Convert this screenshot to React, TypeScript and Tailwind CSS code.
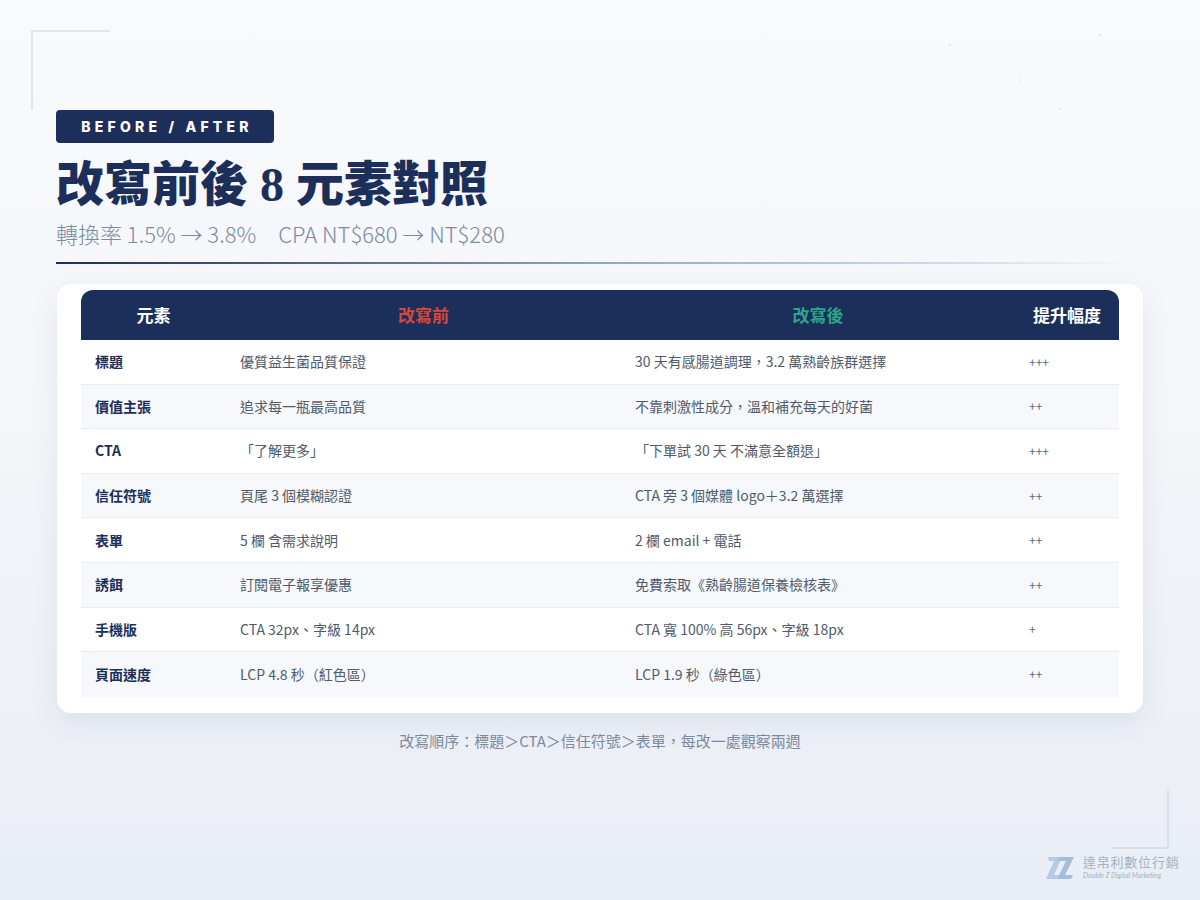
import React from 'react';

const rows = [
    { k: '標題', before: '優質益生菌品質保證', after: '30 天有感腸道調理，3.2 萬熟齡族群選擇', lift: '+++' },
    { k: '價值主張', before: '追求每一瓶最高品質', after: '不靠刺激性成分，溫和補充每天的好菌', lift: '++' },
    { k: 'CTA', before: '「了解更多」', after: '「下單試 30 天 不滿意全額退」', lift: '+++' },
    { k: '信任符號', before: '頁尾 3 個模糊認證', after: 'CTA 旁 3 個媒體 logo＋3.2 萬選擇', lift: '++' },
    { k: '表單', before: '5 欄 含需求說明', after: '2 欄 email + 電話', lift: '++' },
    { k: '誘餌', before: '訂閱電子報享優惠', after: '免費索取《熟齡腸道保養檢核表》', lift: '++' },
    { k: '手機版', before: 'CTA 32px、字級 14px', after: 'CTA 寬 100% 高 56px、字級 18px', lift: '+' },
    { k: '頁面速度', before: 'LCP 4.8 秒（紅色區）', after: 'LCP 1.9 秒（綠色區）', lift: '++' },
];

function Logo() {
    return (
        <div className="absolute left-[1046px] top-[853px] flex items-center gap-[9px]">
            <svg width="28" height="28" viewBox="0 0 28 28">
                {/* double Z mark */}
                <polygon points="2,4 16,4 8,22 15,22 13,26 0,26 8,8 3,8" fill="#b5cbe3" />
                <polygon points="13,4 28,4 19,22 27,22 25,26 11,26 20,8 12,8" fill="#a3bddb" />
            </svg>
            <div className="flex flex-col leading-none">
                <span className="text-[13px] tracking-[0.06em] text-[#a6b2c2]">達帛利數位行銷</span>
                <span className="mt-[4px] text-[7px] italic text-[#a6b2c2] font-['Lato',sans-serif]">Double Z Digital Marketing</span>
            </div>
        </div>
    );
}

export default function App() {
    return (
        <div className="relative w-[1200px] h-[900px] overflow-hidden bg-gradient-to-b from-[#f9fafc] via-[#f3f5f9] to-[#e9edf5] font-['Noto_Sans_CJK_TC','Noto_Sans',sans-serif]">
            {/* corner brackets */}
            <div className="absolute left-[31px] top-[30px] w-[79px] h-[80px] border-l-2 border-t-2 border-[#dfe6ef]"></div>
            <div className="absolute right-[31px] top-[790px] w-[58px] h-[59px] border-r-2 border-b-2 border-[#d8dfe9]"></div>

            {/* faint dots */}
            <div className="absolute left-[949px] top-[44px] w-[2px] h-[2px] rounded-full bg-[#d5dce6]"></div>
            <div className="absolute left-[1099px] top-[34px] w-[2px] h-[2px] rounded-full bg-[#d5dce6]"></div>
            <div className="absolute left-[1019px] top-[79px] w-[2px] h-[2px] rounded-full bg-[#dfe5ec]"></div>
            <div className="absolute left-[1059px] top-[108px] w-[2px] h-[2px] rounded-full bg-[#dfe5ec]"></div>

            <div className="flex flex-col px-[56px] pt-[110px]">
                {/* Badge */}
                <div className="flex h-[33px] w-[218px] items-center justify-center rounded-[4px] bg-[#1c2f5a] pl-[4px] text-[14px] font-extrabold tracking-[0.3em] text-white font-['Inter',sans-serif]">
                    BEFORE / AFTER
                </div>

                {/* Heading */}
                <h1 className="mt-[12px] h-[60px] text-[48px] leading-[60px] font-black text-[#1c2f5a] font-['Liberation_Serif','Noto_Sans_CJK_TC',serif]">
                    改寫前後 8 元素對照
                </h1>

                <p className="mt-[3px] h-[30px] text-[22px] leading-[30px] font-light text-[#7c8ba1]">
                    轉換率 1.5% → 3.8%<span className="ml-[22px]">CPA NT$680 → NT$280</span>
                </p>

                <div className="mt-[14px] h-[2px] w-[1080px] bg-gradient-to-r from-[#1c2f5a] via-[#8aa6c8] to-transparent"></div>

                {/* Table card */}
                <div className="mt-[20px] ml-px w-[1086px] rounded-[14px] bg-white px-[24px] pt-[6px] pb-[16px] shadow-[0_10px_30px_rgba(30,50,90,0.08)]">
                    <div className="grid grid-cols-[145px_395px_394px_104px] h-[50px] items-center rounded-t-[12px] bg-[#1c2f5a] text-[17px] font-bold">
                        <div className="text-center text-white">元素</div>
                        <div className="text-center text-[#d9473b]">改寫前</div>
                        <div className="text-center text-[#2ba58a]">改寫後</div>
                        <div className="text-center text-white">提升幅度</div>
                    </div>
                    {rows.map((r, i) => (
                        <div
                            key={r.k}
                            className={`grid grid-cols-[145px_395px_394px_104px] h-[44.6px] items-center text-[14px] ${i % 2 === 1 ? 'bg-[#f6f8fb]' : 'bg-white'} ${i < rows.length - 1 ? 'border-b border-[#e9edf3]' : ''}`}
                        >
                            <div className="pl-[14px] font-bold text-[#1c2f5a]">{r.k}</div>
                            <div className="pl-[14px] text-[#4f5b6b]">{r.before}</div>
                            <div className="pl-[14px] text-[#4f5b6b]">{r.after}</div>
                            <div className="pl-[14px] text-[12px] text-[#5d6878]">{r.lift}</div>
                        </div>
                    ))}
                </div>

                <p className="mt-[18px] text-center text-[15px] leading-[20px] text-[#7b8aa0]">
                    改寫順序：標題＞CTA＞信任符號＞表單，每改一處觀察兩週
                </p>
            </div>

            <Logo />
        </div>
    );
}
